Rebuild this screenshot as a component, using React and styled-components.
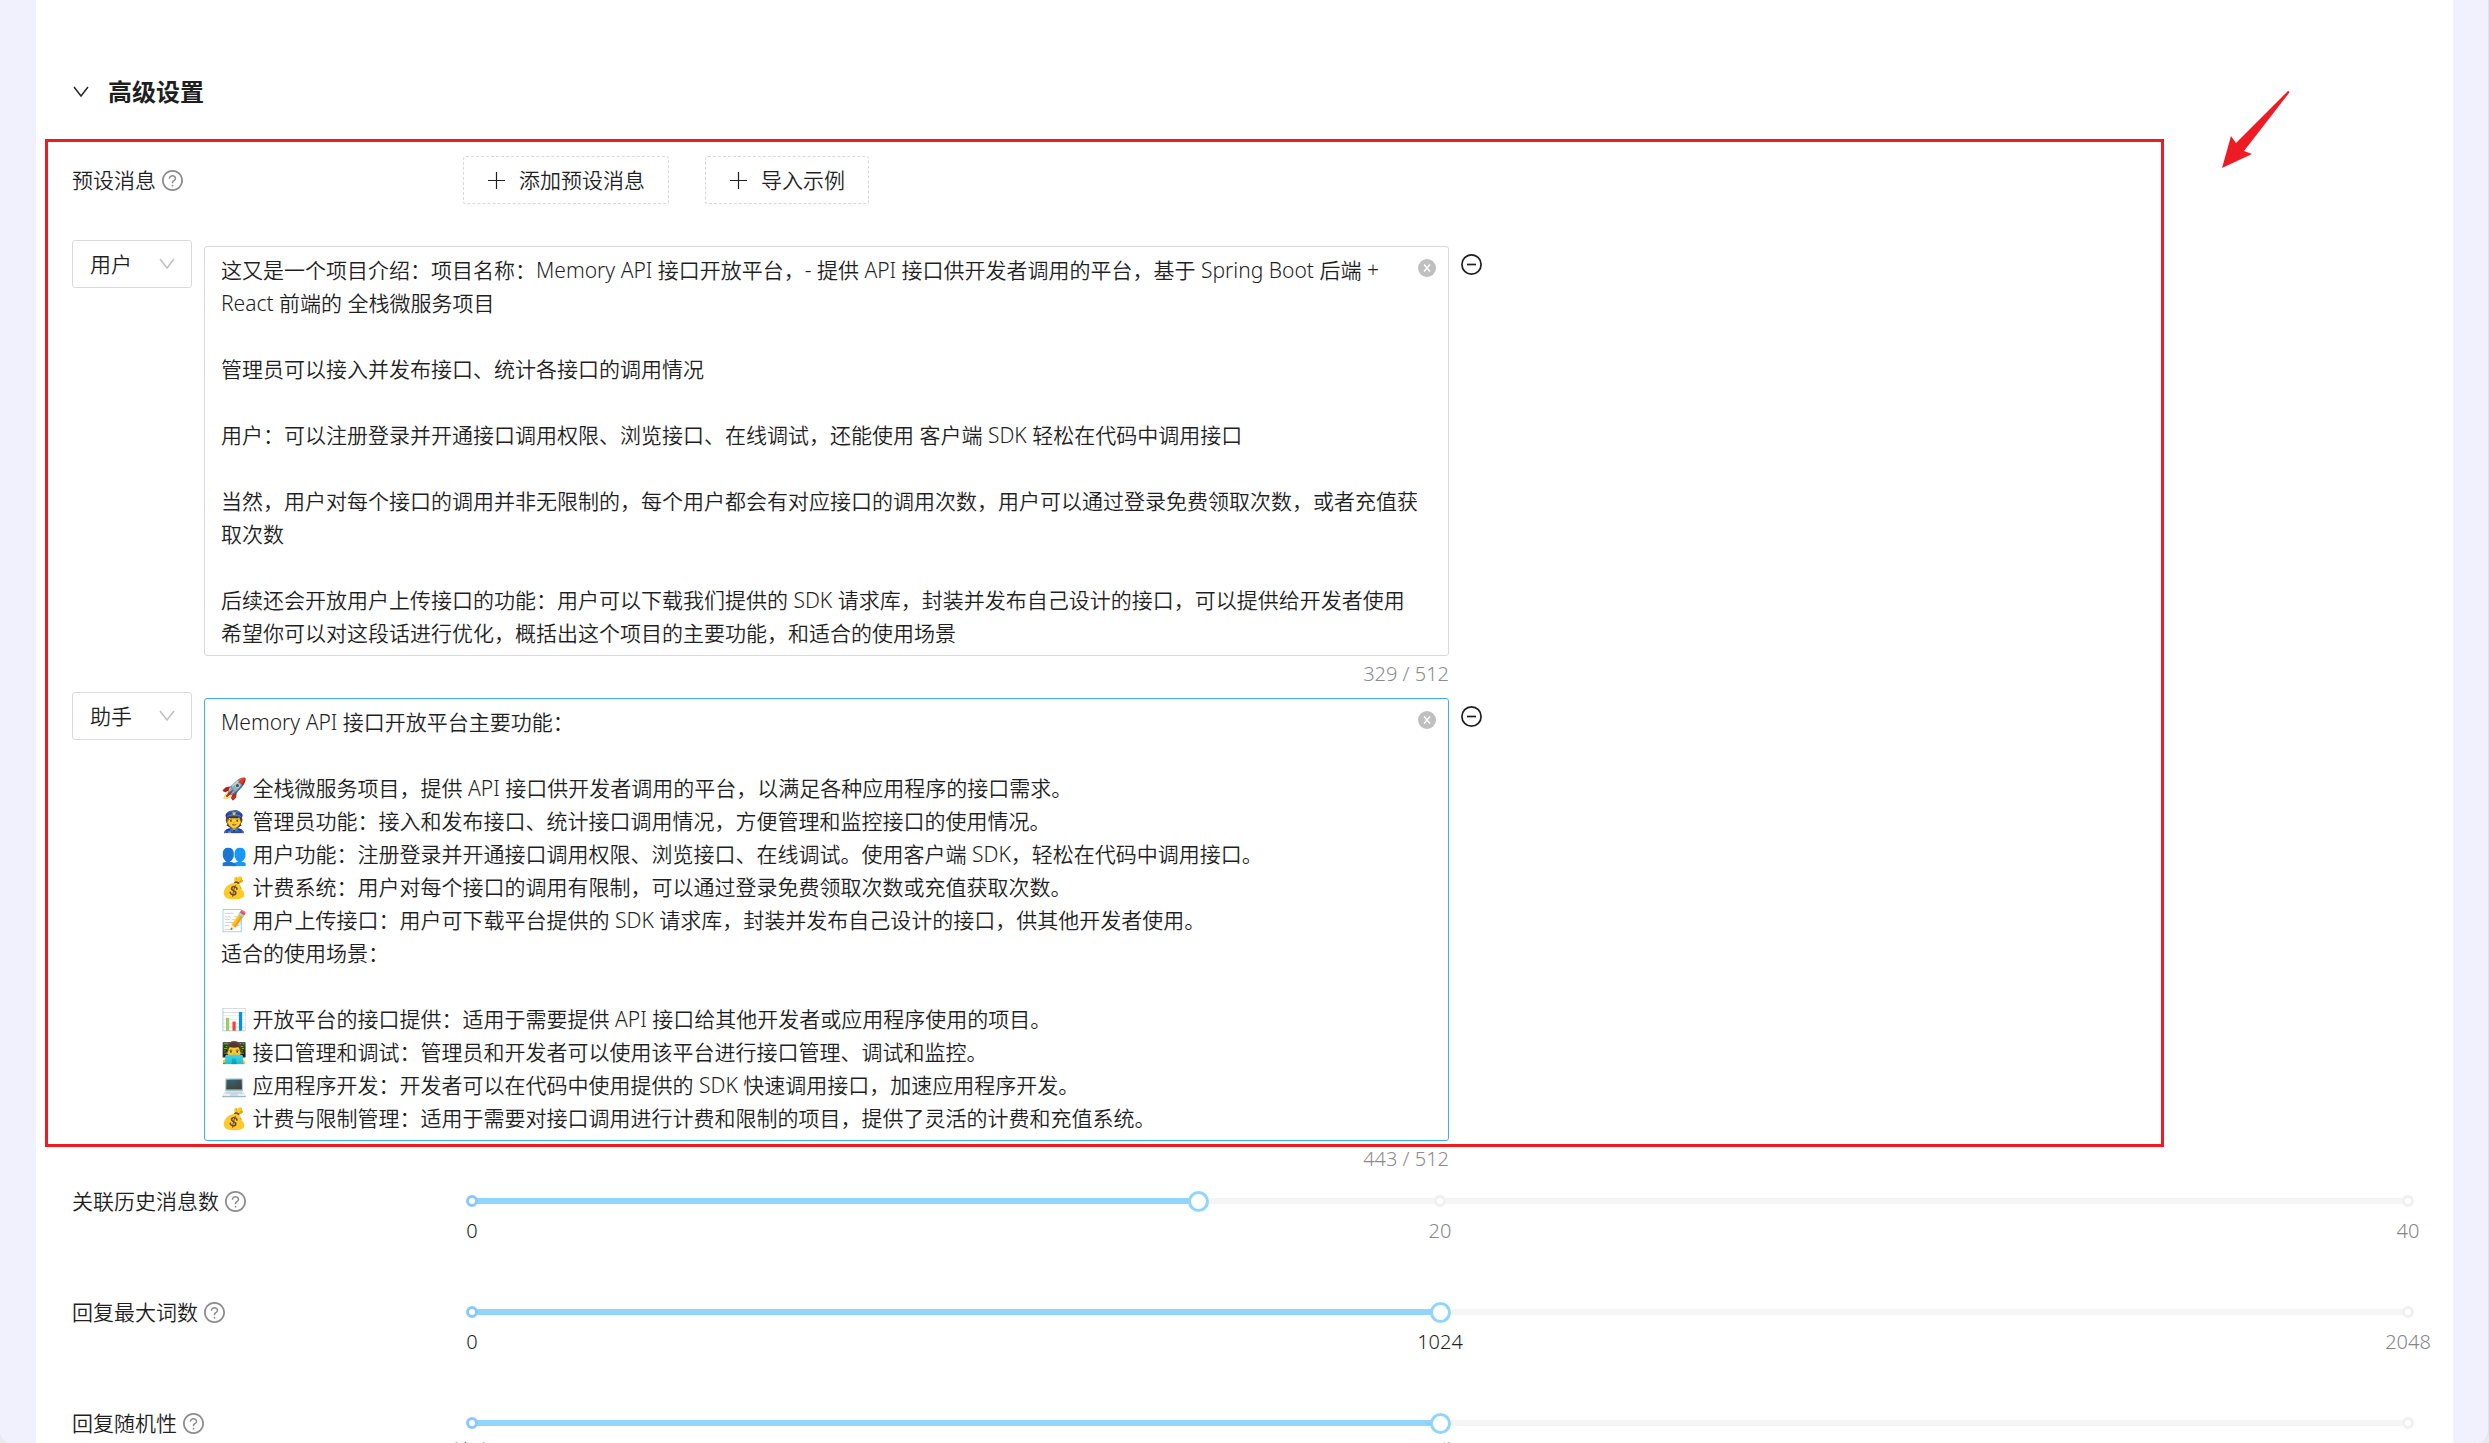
import React, { useState } from "react";
import styled, { createGlobalStyle } from "styled-components";

const sans = `"Noto Sans", "Noto Sans CJK SC", "Noto Color Emoji", sans-serif`;

const GlobalStyle = createGlobalStyle`
  *, *::before, *::after { box-sizing: border-box; }
  html, body { margin: 0; height: 100%; overflow: hidden; }
  #root { height: 100%; }
  body {
    background: #e9e9ee;
    color: #1f1f1f;
    font: 350 21px/33px ${sans};
  }
`;

const Frame = styled.main`
  height: 100vh;
  padding: 0 35px 0 36px;
  background: #f1f1fe;
  border-right: 1px solid #e2e2ee;
  border-radius: 0 0 12px 12px;
  overflow: hidden;
`;

const Panel = styled.section`
  height: 100%;
  padding: 73px 36px 0;
  background: #fff;
  position: relative;
  overflow: hidden;
`;

const Heading = styled.h2`
  display: flex;
  align-items: center;
  gap: 18px;
  margin: 0;
  font-size: 24px;
  line-height: 38px;
  font-weight: 700;
`;

const Highlight = styled.div`
  position: absolute;
  left: 9px;
  right: 289px;
  top: 139px;
  height: 1008px;
  border: 3px solid #ed1c24;
  pointer-events: none;
`;

const Arrow = styled.svg`
  position: absolute;
  right: 163px;
  top: 90px;
  width: 68px;
  height: 78px;
`;

const PresetBar = styled.div`
  display: flex;
  align-items: center;
  margin-top: 45px;
  height: 48px;
`;

const Label = styled.label`
  display: flex;
  align-items: center;
  gap: 6px;
  width: 391px;
  flex: none;
`;

const Buttons = styled.div`
  display: flex;
  gap: 36px;
`;

const DashedButton = styled.button`
  display: flex;
  align-items: center;
  gap: 12px;
  height: 48px;
  padding: 0 23px 0 22px;
  background: #fff;
  border: 1px dashed #d9d9d9;
  border-radius: 3px;
  box-shadow: 0 3px 0 rgba(0, 0, 0, 0.016);
  color: inherit;
  font: inherit;
`;

const Messages = styled.div`
  display: flex;
  flex-direction: column;
  margin-top: 36px;
`;

const MessageRow = styled.div`
  display: flex;
  align-items: flex-start;
  gap: 12px;
  height: ${(p) => p.$height}px;
`;

const SelectBox = styled.div`
  position: relative;
  flex: none;
  width: 120px;
  height: 48px;

  select {
    appearance: none;
    width: 100%;
    height: 100%;
    padding: 0 17px;
    background: #fff;
    border: 1px solid #d9d9d9;
    border-radius: 3px;
    color: inherit;
    font: inherit;
  }

  svg {
    position: absolute;
    right: 16px;
    top: 15px;
    pointer-events: none;
  }
`;

const Editor = styled.div`
  position: relative;
  flex: none;
  width: 1245px;
  margin-top: 6px;
`;

const TextArea = styled.textarea`
  display: block;
  width: 100%;
  height: ${(p) => p.$rows * 33 + 14}px;
  padding: 7px 28px 5px 16px;
  background: #fff;
  border: 1px solid ${(p) => (p.$active ? "#40a9ff" : "#d9d9d9")};
  border-radius: 3px;
  outline: none;
  resize: none;
  overflow: hidden;
  color: inherit;
  font: inherit;
`;

const ClearButton = styled.button`
  position: absolute;
  right: 13px;
  top: 13px;
  display: flex;
  padding: 0;
  border: 0;
  background: none;
`;

const Count = styled.div`
  padding-top: 1px;
  color: #8c8c8c;
  font-size: 20px;
  line-height: 33px;
  text-align: right;
`;

const RemoveButton = styled.button`
  display: flex;
  margin-top: 14px;
  padding: 0;
  border: 0;
  background: none;
  color: inherit;
`;

const SliderRow = styled.div`
  display: flex;
  align-items: flex-start;
  height: 111px;
`;

const SliderBody = styled.div`
  flex: 1;
  padding: 6px 9px 0;
`;

const Rail = styled.div`
  position: relative;
  height: 18px;
`;

const Range = styled.input`
  appearance: none;
  display: block;
  width: calc(100% + 21px);
  height: 21px;
  margin: 0 -10px;
  background: none;
  position: relative;

  &::-webkit-slider-runnable-track {
    height: 21px;
    background: transparent;
  }
  &::-webkit-slider-thumb {
    appearance: none;
    width: 21px;
    height: 21px;
    border: 3px solid #91d5ff;
    border-radius: 50%;
    background: #fff;
  }
`;

const Track = styled.span`
  position: absolute;
  left: 0;
  top: 7px;
  width: ${(p) => p.$size}%;
  height: 6px;
  background: ${(p) => (p.$on ? "#91d5ff" : "#f5f5f5")};
`;

const Dot = styled.span`
  position: absolute;
  left: ${(p) => p.$at}%;
  top: 4px;
  width: 12px;
  height: 12px;
  margin-left: -6px;
  border: 3px solid ${(p) => (p.$on ? "#8cc8ff" : "#f0f0f0")};
  border-radius: 50%;
  background: #fff;
`;

const Marks = styled.div`
  position: relative;
  height: 33px;
  margin-top: 5px;
  font-size: 20px;
`;

const Mark = styled.span`
  position: absolute;
  left: ${(p) => p.$at}%;
  transform: translateX(-50%);
  white-space: nowrap;
  color: ${(p) => (p.$on ? "#1f1f1f" : "#858585")};
`;

const Chevron = ({ size, color }) => (
  <svg width={size} height={size} viewBox="0 0 18 18" fill="none" stroke={color} strokeWidth="1.5">
    <path d="M2 4 9 13l7-9" />
  </svg>
);

const Help = () => (
  <svg width="21" height="21" viewBox="64 64 896 896" fill="#8c8c8c" aria-hidden="true">
    <path d="M512 64C264.6 64 64 264.6 64 512s200.6 448 448 448 448-200.6 448-448S759.4 64 512 64zm0 820c-205.4 0-372-166.6-372-372s166.6-372 372-372 372 166.6 372 372-166.6 372-372 372z" />
    <path d="M623.6 316.7C593.6 290.4 554 276 512 276s-81.6 14.5-111.6 40.7C369.2 344 352 380.7 352 420v7.6c0 4.4 3.6 8 8 8h48c4.4 0 8-3.6 8-8V420c0-44.1 43.1-80 96-80s96 35.9 96 80c0 31.1-22 59.6-56.1 72.7-21.2 8.1-39.2 22.3-52.1 40.9-13.1 19-19.9 41.8-19.9 64.9V620c0 4.4 3.6 8 8 8h48c4.4 0 8-3.6 8-8v-22.7a48.3 48.3 0 0 1 30.9-44.8c59-22.7 97.1-74.7 97.1-132.5.1-39.3-17.1-76-48.3-103.3zM472 732a40 40 0 1 0 80 0 40 40 0 1 0-80 0z" />
  </svg>
);

const Plus = () => (
  <svg width="21" height="21" viewBox="0 0 21 21" stroke="currentColor" strokeWidth="1.2" aria-hidden="true">
    <path d="M10.5 2v17M2 10.5h17" />
  </svg>
);

const Clear = () => (
  <svg width="18" height="18" viewBox="0 0 18 18" aria-hidden="true">
    <circle cx="9" cy="9" r="9" fill="#bfbfbf" />
    <path d="m6 5.5 6 7M12 5.5l-6 7" stroke="#fff" strokeWidth="1.5" />
  </svg>
);

const Minus = () => (
  <svg width="21" height="21" viewBox="0 0 21 21" fill="none" stroke="currentColor" strokeWidth="1.7" aria-hidden="true">
    <circle cx="10.5" cy="10.5" r="9.6" />
    <path d="M6 10.5h9" />
  </svg>
);

const userText = `这又是一个项目介绍：项目名称：Memory API 接口开放平台，- 提供 API 接口供开发者调用的平台，基于 Spring Boot 后端 + React 前端的 全栈微服务项目

管理员可以接入并发布接口、统计各接口的调用情况

用户：可以注册登录并开通接口调用权限、浏览接口、在线调试，还能使用 客户端 SDK 轻松在代码中调用接口

当然，用户对每个接口的调用并非无限制的，每个用户都会有对应接口的调用次数，用户可以通过登录免费领取次数，或者充值获取次数

后续还会开放用户上传接口的功能：用户可以下载我们提供的 SDK 请求库，封装并发布自己设计的接口，可以提供给开发者使用
希望你可以对这段话进行优化，概括出这个项目的主要功能，和适合的使用场景`;

const assistantText = `Memory API 接口开放平台主要功能：

🚀 全栈微服务项目，提供 API 接口供开发者调用的平台，以满足各种应用程序的接口需求。
👮 管理员功能：接入和发布接口、统计接口调用情况，方便管理和监控接口的使用情况。
👥 用户功能：注册登录并开通接口调用权限、浏览接口、在线调试。使用客户端 SDK，轻松在代码中调用接口。
💰 计费系统：用户对每个接口的调用有限制，可以通过登录免费领取次数或充值获取次数。
📝 用户上传接口：用户可下载平台提供的 SDK 请求库，封装并发布自己设计的接口，供其他开发者使用。
适合的使用场景：

📊 开放平台的接口提供：适用于需要提供 API 接口给其他开发者或应用程序使用的项目。
👨‍💻 接口管理和调试：管理员和开发者可以使用该平台进行接口管理、调试和监控。
💻 应用程序开发：开发者可以在代码中使用提供的 SDK 快速调用接口，加速应用程序开发。
💰 计费与限制管理：适用于需要对接口调用进行计费和限制的项目，提供了灵活的计费和充值系统。`;

function Message({ role, text, rows, height, count, active }) {
  const [value, setValue] = useState(text);
  return (
    <MessageRow $height={height}>
      <SelectBox>
        <select aria-label="角色" defaultValue={role}>
          <option>用户</option>
          <option>助手</option>
        </select>
        <Chevron size={18} color="#bfbfbf" />
      </SelectBox>
      <Editor>
        <TextArea
          aria-label={role}
          $rows={rows}
          $active={active}
          spellCheck={false}
          value={value}
          onChange={(e) => setValue(e.target.value)}
        />
        <ClearButton type="button" aria-label="清空" onClick={() => setValue("")}>
          <Clear />
        </ClearButton>
        <Count>{count} / 512</Count>
      </Editor>
      <RemoveButton type="button" aria-label="删除">
        <Minus />
      </RemoveButton>
    </MessageRow>
  );
}

function Setting({ id, label, max, initial, marks }) {
  const [value, setValue] = useState(initial);
  const percent = (value / max) * 100;
  return (
    <SliderRow>
      <Label htmlFor={id}>
        {label}
        <Help />
      </Label>
      <SliderBody>
        <Rail>
          <Track $size={100} />
          <Track $size={percent} $on />
          {marks.map((m) => (
            <Dot key={m.at} $at={m.at} $on={m.at <= percent} />
          ))}
          <Range id={id} type="range" min="0" max={max} value={value} onChange={(e) => setValue(+e.target.value)} />
        </Rail>
        <Marks>
          {marks.map((m) => (
            <Mark key={m.at} $at={m.at} $on={m.at <= percent}>
              {m.text}
            </Mark>
          ))}
        </Marks>
      </SliderBody>
    </SliderRow>
  );
}

const settings = [
  { id: "history", label: "关联历史消息数", max: 40, initial: 15, marks: [{ at: 0, text: "0" }, { at: 50, text: "20" }, { at: 100, text: "40" }] },
  { id: "length", label: "回复最大词数", max: 2048, initial: 1024, marks: [{ at: 0, text: "0" }, { at: 50, text: "1024" }, { at: 100, text: "2048" }] },
  { id: "random", label: "回复随机性", max: 100, initial: 50, marks: [{ at: 0, text: "精确" }, { at: 50, text: "平衡" }, { at: 100 }] },
];

export default function App() {
  return (
    <>
      <GlobalStyle />
      <Frame>
        <Panel>
          <Heading>
            <Chevron size={18} color="#262626" />
            高级设置
          </Heading>
          <PresetBar>
            <Label as="span">
              预设消息
              <Help />
            </Label>
            <Buttons>
              <DashedButton type="button"><Plus />添加预设消息</DashedButton>
              <DashedButton type="button"><Plus />导入示例</DashedButton>
            </Buttons>
          </PresetBar>
          <Messages>
            <Message role="用户" text={userText} rows={12} height={452} count={329} />
            <Message role="助手" text={assistantText} rows={13} height={493} count={443} active />
          </Messages>
          {settings.map((s) => (
            <Setting key={s.id} {...s} />
          ))}
          <Highlight />
          <Arrow viewBox="0 0 68 78" fill="#ed1c24" aria-hidden="true">
            <path d="M0 78 9 46l5 7L66 1q2 0 1 2L22 61l8 3z" />
          </Arrow>
        </Panel>
      </Frame>
    </>
  );
}
